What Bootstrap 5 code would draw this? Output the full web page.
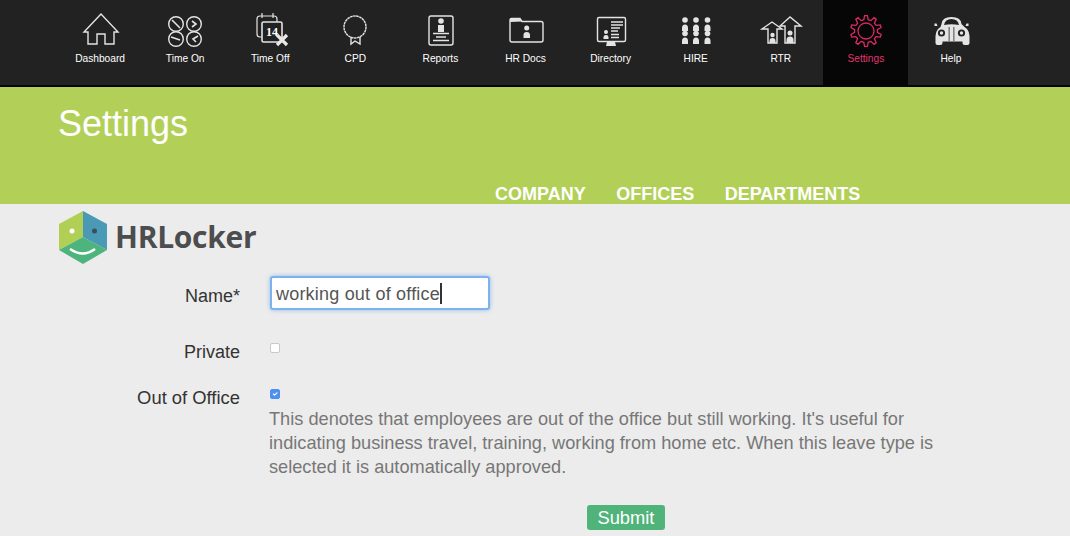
<!DOCTYPE html>
<html lang="en">
<head>
    <meta charset="UTF-8">
    <title>HRLocker Settings</title>
    <link href="https://cdn.jsdelivr.net/npm/bootstrap@5.3.0/dist/css/bootstrap.min.css" rel="stylesheet">
    <style>
        body {
            background-color: #ececec;
            font-family: "Liberation Sans", Arial, sans-serif;
            overflow: hidden;
        }
        .top-menu {
            height: 87px;
            background-color: #222;
            border-bottom: 2px solid #050505;
            padding-left: 57.5px;
        }
        .menu-item {
            width: 85.1px;
            height: 85px;
            padding-top: 10px;
            color: #fff;
            font-size: 10.2px;
            line-height: 13px;
            text-decoration: none;
            text-align: center;
        }
        .menu-item svg {
            display: block;
            margin: 0 auto 2px;
            color: #e4e4e4;
        }
        .menu-item.active-item {
            background-color: #060606;
            color: #e0356f;
        }
        .menu-item.active-item svg { color: #d92a63; }
        .title-band {
            height: 117px;
            background-color: #b2d057;
            padding-left: 58px;
            color: #fff;
        }
        .title-band h1 {
            font-size: 36px;
            font-weight: 400;
            line-height: 42px;
            padding-top: 16px;
            margin: 0;
            height: 98px;
        }
        .band-tabs {
            padding-left: 437px;
            gap: 30.5px;
            font-size: 18px;
            font-weight: 700;
            line-height: 19px;
        }
        .band-tabs a { color: #fff; text-decoration: none; }
        .logo-row {
            padding: 7px 0 0 59px;
            gap: 8px;
            height: 72px;
        }
        .logo-word {
            font-family: "Open Sans", sans-serif;
            font-weight: 700;
            font-size: 30px;
            line-height: 32px;
            letter-spacing: -0.3px;
            color: #4c4d4f;
            margin-top: 10px;
        }
        .form-line {
            gap: 30px;
            font-size: 18px;
            color: #333;
        }
        .form-line label {
            width: 240px;
            flex: none;
            text-align: right;
            margin: 0;
            line-height: 24px;
            padding-top: 1px;
        }
        .form-line.name-line label { padding-top: 8px; }
        .private-line { margin-top: 29px; }
        .out-line { margin-top: 21px; }
        .form-line.out-line label { font-size: 18.4px; }
        .text-wrap-box {
            position: relative;
            width: 220px;
        }
        .leave-name,
        .leave-name:focus {
            height: 34px;
            padding: 3px 4px 1px;
            font-size: 18px;
            letter-spacing: .2px;
            color: #555;
            border: 2px solid #7db3ec;
            border-radius: 3px;
            box-shadow: 0 0 4px rgba(102, 165, 235, .7);
            font-family: "Liberation Sans", Arial, sans-serif;
        }
        .fake-caret {
            position: absolute;
            left: 170px;
            top: 7px;
            width: 1.5px;
            height: 21px;
            background-color: #333;
        }
        .form-check-input.small-check {
            width: 10px;
            height: 10px;
            margin: 4px 0 0;
            display: block;
            border-radius: 2px;
            border-color: #c8c8c8;
            flex: none;
        }
        .form-check-input.small-check:checked {
            background-color: #4d90f0;
            border-color: #4d90f0;
        }
        .help-note {
            width: 680px;
            margin: 8px 0 0 -1px;
            color: #777;
            font-size: 18.2px;
            line-height: 24px;
        }
        .save-btn {
            background-color: #4fb37a;
            border: 0;
            color: #fff;
            font-size: 18.3px;
            line-height: 21px;
            padding: 2px 10.5px;
            border-radius: 3px;
        }
        .save-row { padding: 26px 0 0 587px; }
    </style>
</head>
<body>
    <div class="top-menu d-flex">
        <a class="menu-item" href="#">
            <svg width="60" height="40" viewBox="0 0 60 40" fill="none" stroke="currentColor" stroke-width="1.4"><path d="M31 4 14 22h4v12h9V24h8v10h9V22h4z"/></svg>
            Dashboard
        </a>
        <a class="menu-item" href="#">
            <svg width="60" height="40" viewBox="0 0 60 40" fill="none" stroke="currentColor" stroke-width="1.4"><circle cx="21" cy="14" r="7.3"/><circle cx="39" cy="14" r="7.3"/><circle cx="21" cy="29" r="7.3"/><circle cx="39" cy="29" r="7.3"/><path d="m17 10 8 8M37 11l4 3-4 3M16 27l9 3M43 26l-5 3 3 3" stroke-width="1.6"/></svg>
            Time On
        </a>
        <a class="menu-item" href="#">
            <svg width="60" height="40" viewBox="0 0 60 40" fill="none" stroke="currentColor" stroke-width="1.2"><path d="M22 27h-2q-3 0-3-3V9q0-3 3-3h14q3 0 3 3v3M22 3v5M33 3v5"/><rect x="22" y="12" width="20" height="20" rx="1.5" stroke-width="1.6"/><text x="32" y="26" font-family="Liberation Serif" font-weight="700" font-size="12" fill="#fff" stroke="none" text-anchor="middle">14</text><path d="m37 25 10 10M47 25 37 35" stroke-width="3.2" stroke="#e8e8e8"/></svg>
            Time Off
        </a>
        <a class="menu-item" href="#">
            <svg width="60" height="40" viewBox="0 0 60 40" fill="none" stroke="currentColor" stroke-width="1.4"><circle cx="30" cy="17" r="11" stroke-dasharray="2.6 .5"/><path d="M26 27v7l4-3 5 3v-7"/></svg>
            CPD
        </a>
        <a class="menu-item" href="#">
            <svg width="60" height="40" viewBox="0 0 60 40" fill="none" stroke="currentColor" stroke-width="1.4"><rect x="19" y="6" width="24" height="29" rx="2"/><circle cx="31" cy="11" r="2.8" fill="currentColor" stroke="none"/><path d="M28 15h6v7h-6z" fill="currentColor" stroke="none"/><path d="M23 23.500h16M26 27h10M23 30.500h16"/></svg>
            Reports
        </a>
        <a class="menu-item" href="#">
            <svg width="60" height="40" viewBox="0 0 60 40" fill="none" stroke="currentColor" stroke-width="1.4"><path d="M14 30V10q0-1.500 1.500-1.500H24l2 3h19q2 0 2 2V30q0 2-2 2H16q-2 0-2-2z"/><path d="M14 12V9.500q0-1.500 1.500-1.500H23l3 3.500z" fill="currentColor" stroke="none"/><circle cx="30.700" cy="18" r="2.500" fill="currentColor" stroke="none"/><path d="M27.500 28v-3q0-3 3.200-3t3.300 3v3z" fill="currentColor" stroke="none"/></svg>
            HR Docs
        </a>
        <a class="menu-item" href="#">
            <svg width="60" height="40" viewBox="0 0 60 40" fill="none" stroke="currentColor" stroke-width="1.4"><rect x="16.500" y="7.500" width="28" height="24" rx="1.500"/><path d="M26 32h8l1 4H25z" fill="currentColor" stroke="none"/><circle cx="25" cy="22" r="2" fill="currentColor" stroke="none"/><path d="M22.500 29v-2q0-2 2.500-2t2.500 2v2z" fill="currentColor" stroke="none"/><path d="M30 15h12M30 18h9M30 21h7M30 24.500h8M30 27.500h8" stroke-width="1.500"/><path d="M30 12h12" stroke-width="1.500"/></svg>
            Directory
        </a>
        <a class="menu-item" href="#">
            <svg width="60" height="40" viewBox="0 0 60 40" fill="currentColor"><circle cx="19" cy="10" r="2.800"/><path d="M16 21v-3q0-3.500 3-3.500t3 3.500v3z"/><circle cx="30" cy="10" r="2.800"/><path d="M27 21v-3q0-3.500 3-3.500t3 3.500v3z"/><circle cx="41.500" cy="10" r="2.800"/><path d="M38.500 21v-3q0-3.500 3-3.500t3 3.500v3z"/><circle cx="19" cy="23.500" r="2.800"/><path d="M16 34v-3q0-3.500 3-3.500t3 3.500v3z"/><circle cx="30" cy="23.500" r="2.800"/><path d="M27 34v-3q0-3.500 3-3.500t3 3.500v3z"/><circle cx="41.500" cy="23.500" r="2.800"/><path d="M38.500 34v-3q0-3.500 3-3.500t3 3.500v3z"/></svg>
            HIRE
        </a>
        <a class="menu-item" href="#">
            <svg width="60" height="40" viewBox="0 0 60 40" fill="none" stroke="currentColor" stroke-width="1.4"><path d="m21 12-10 7h6v14h9V19h5z"/><path d="M39 7 29 16h5v17h10V16h6z"/><circle cx="21.500" cy="25" r="2.200" fill="currentColor" stroke="none"/><path d="M18.500 33v-2q0-3 3-3t3 3v2z" fill="currentColor" stroke="none"/><circle cx="39" cy="23" r="2.500" fill="currentColor" stroke="none"/><path d="M35.500 33v-3q0-3.500 3.500-3.500t3.500 3.500v3z" fill="currentColor" stroke="none"/></svg>
            RTR
        </a>
        <a class="menu-item active-item" href="#">
            <svg width="60" height="40" viewBox="0 0 60 40" fill="none" stroke="currentColor" stroke-width="1.3"><polygon id="gearShape" points=""/><circle cx="30" cy="21" r="8"/></svg>
            Settings
        </a>
        <a class="menu-item" href="#">
            <svg width="60" height="40" viewBox="0 0 60 40" fill="currentColor"><path d="M20.500 14q.5-7 10-7t10 7l3 3 2.500 2q2.500 3 2.500 7v7q0 2-2 2h-3q-2 0-2-2v-1.500H21.500V33q0 2-2 2h-3q-2 0-2-2v-7q0-4 2.500-7l2.500-2z"/><path d="M23 15q1-6 7.500-6t7.500 6q-7.500-1.500-15 0z" fill="#222"/><circle cx="20.500" cy="23" r="3.600" fill="#222"/><circle cx="40.500" cy="23" r="3.600" fill="#222"/><circle cx="20.500" cy="23" r="1.700"/><circle cx="40.500" cy="23" r="1.700"/><path d="M27.700 17h.8v14h-.8zM32.500 17h.8v14h-.8z" fill="#222"/><path d="M16.500 16h-3v-2.500h2zM44.500 16h3v-2.500h-2z"/></svg>
            Help
        </a>
    </div>

    <div class="title-band">
        <h1>Settings</h1>
        <div class="band-tabs d-flex">
            <a href="#">COMPANY</a>
            <a href="#">OFFICES</a>
            <a href="#">DEPARTMENTS</a>
        </div>
    </div>

    <div class="logo-row d-flex">
        <svg width="48" height="53" viewBox="0 0 48 53">
            <path d="M24 0 0 13v26l24 -13z" fill="#b2cf55"/>
            <path d="M24 0 48 13v26L24 26z" fill="#4a9ab5"/>
            <path d="M0 39 24 26l24 13-24 14z" fill="#4cb47c"/>
            <circle cx="13" cy="20" r="2.500" fill="#fff"/>
            <circle cx="35.500" cy="20" r="2.500" fill="#3d4d55"/>
            <path d="M11 38q13 9 25 0" fill="none" stroke="#fff" stroke-width="2.500"/>
        </svg>
        <div class="logo-word">HRLocker</div>
    </div>

    <form onsubmit="return false">
        <div class="form-line name-line d-flex align-items-start">
            <label for="leaveName">Name*</label>
            <div class="text-wrap-box">
                <input class="form-control leave-name" id="leaveName" type="text" value="working out of office">
                <span class="fake-caret"></span>
            </div>
        </div>
        <div class="form-line private-line d-flex align-items-start">
            <label for="isPrivate">Private</label>
            <input class="form-check-input small-check" id="isPrivate" type="checkbox">
        </div>
        <div class="form-line out-line d-flex align-items-start">
            <label for="isOut">Out of Office</label>
            <div>
                <input class="form-check-input small-check" id="isOut" type="checkbox" checked>
                <div class="help-note">This denotes that employees are out of the office but still working. It's useful for indicating business travel, training, working from home etc. When this leave type is selected it is automatically approved.</div>
            </div>
        </div>
        <div class="save-row">
            <button class="btn save-btn" type="submit">Submit</button>
        </div>
    </form>

    <script>
        // gear outline: 10 teeth round the centre of the settings icon
        const pts = [];
        for (let i = 0; i < 10; i++) {
            const a = -90 + i * 36;
            [[-11, 11.5], [-5, 15.5], [5, 15.5], [11, 11.5]].forEach(([d, r]) => {
                const t = (a + d) * Math.PI / 180;
                pts.push((30 + r * Math.cos(t)).toFixed(1) + ',' + (21 + r * Math.sin(t)).toFixed(1));
            });
        }
        document.getElementById('gearShape').setAttribute('points', pts.join(' '));
    </script>
    <script src="https://cdn.jsdelivr.net/npm/bootstrap@5.3.0/dist/js/bootstrap.bundle.min.js"></script>
</body>
</html>
